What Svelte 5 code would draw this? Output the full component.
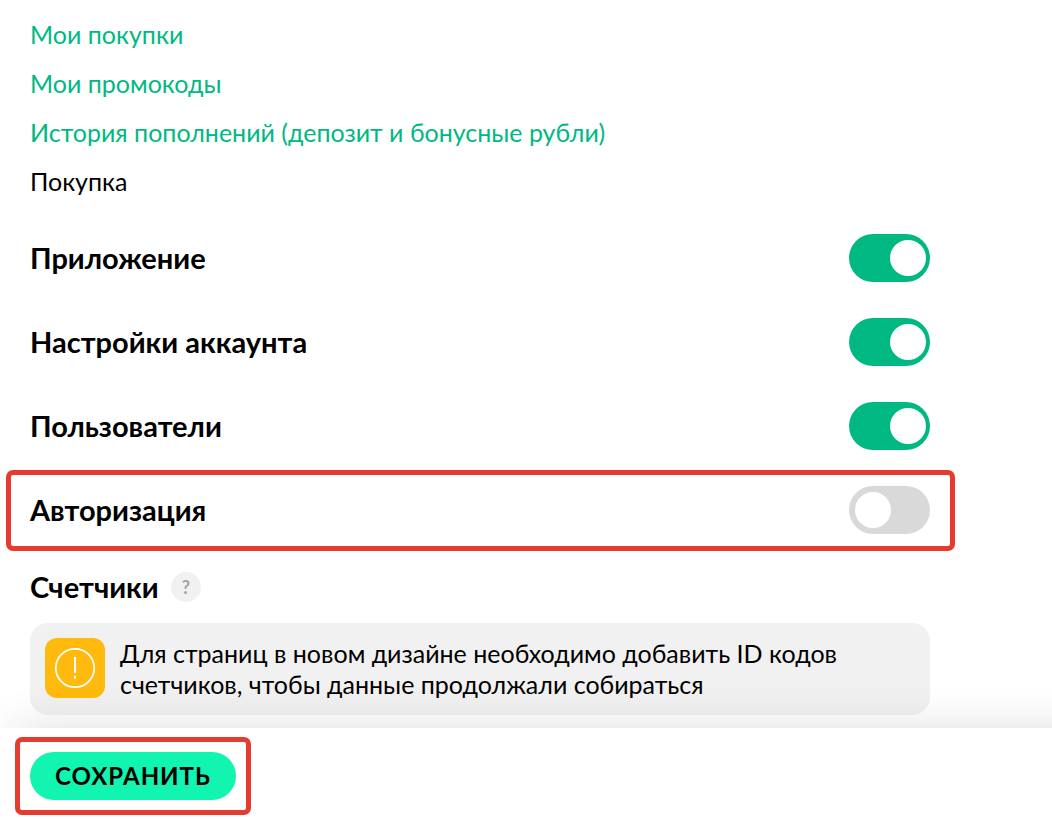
<script>
  const links = [
    'Мои покупки',
    'Мои промокоды',
    'История пополнений (депозит и бонусные рубли)'
  ];

  let sections = $state([
    { id: 'app', title: 'Приложение', on: true },
    { id: 'account', title: 'Настройки аккаунта', on: true },
    { id: 'users', title: 'Пользователи', on: true },
    { id: 'auth', title: 'Авторизация', on: false, marked: true }
  ]);
</script>

<div class="page">
  <main>
    <ul class="links">
      {#each links as link}
        <li><a href="#top">{link}</a></li>
      {/each}
      <li>Покупка</li>
    </ul>

    <div class="sections">
      {#each sections as section}
        <div class="section" class:marked={section.marked}>
          <label class="title" for={section.id}>{section.title}</label>
          <input id={section.id} class="toggle" type="checkbox" role="switch" bind:checked={section.on} />
        </div>
      {/each}
    </div>

    <div class="counters">
      <h2 class="title">Счетчики</h2>
      <button class="help" type="button">?</button>
    </div>

    <div class="notice">
      <svg class="badge" viewBox="0 0 60 60" aria-hidden="true">
        <rect width="60" height="60" rx="12" fill="#ffba0d" />
        <circle cx="30" cy="30" r="19.2" fill="none" stroke="#fff" stroke-width="1.7" />
        <path d="M30 19v16M30 37.7v3" fill="none" stroke="#fff" stroke-width="2" />
      </svg>
      <p>Для страниц в новом дизайне необходимо добавить ID кодов счетчиков, чтобы данные продолжали собираться</p>
    </div>
  </main>

  <footer>
    <div class="action marked">
      <button class="save" type="button">Сохранить</button>
    </div>
  </footer>
</div>

<style>
  :global(body) {
    margin: 0;
    background: #fff;
  }

  .page {
    display: flex;
    flex-direction: column;
    min-height: 100vh;
    overflow: hidden;
    color: #000;
    font-family: Lato, 'Open Sans', sans-serif;
    font-size: 25px;
    line-height: 31px;
  }

  main {
    box-sizing: border-box;
    width: 100%;
    max-width: 960px;
    padding: 19px 30px 13px;
  }

  .links {
    display: flex;
    flex-direction: column;
    gap: 18px;
    margin: 0 0 37px;
    padding: 0;
    list-style: none;
  }

  a {
    color: #00b982;
    text-decoration: none;
  }

  .sections {
    display: flex;
    flex-direction: column;
    gap: 36px;
  }

  .section {
    display: flex;
    align-items: center;
    justify-content: space-between;
  }

  .title {
    margin: 0;
    font-size: 29px;
    font-weight: 700;
    line-height: 30px;
  }

  .marked {
    position: relative;
  }

  .marked::after {
    content: '';
    position: absolute;
    inset: -16px -25px -17px -24px;
    border: 5px solid #e63c30;
    border-radius: 7px;
    pointer-events: none;
  }

  .toggle {
    appearance: none;
    display: flex;
    align-items: center;
    box-sizing: border-box;
    width: 81px;
    height: 48px;
    margin: 0;
    padding: 0 6px;
    border-radius: 24px;
    background: #d9d9d9;
    cursor: pointer;
  }

  .toggle::before {
    content: '';
    width: 36px;
    height: 36px;
    border-radius: 50%;
    background: #fff;
  }

  .toggle:checked {
    justify-content: flex-end;
    padding: 0 4px;
    background: #00b982;
  }

  .counters {
    display: flex;
    align-items: center;
    gap: 12px;
    margin: 38px 0 21px;
  }

  .help {
    width: 30px;
    height: 30px;
    padding: 0;
    border: 0;
    border-radius: 50%;
    background: #f1f1f1;
    color: #a3a3a3;
    font: 700 18px/30px Lato, 'Open Sans', sans-serif;
  }

  .notice {
    display: flex;
    gap: 15px;
    padding: 15px;
    border-radius: 18px;
    background: #f1f1f1;
  }

  .badge {
    flex: none;
    width: 60px;
    height: 60px;
  }

  .notice p {
    margin: 0;
    max-width: 750px;
  }

  footer {
    position: relative;
    flex: 1;
    margin-right: -60px;
    padding: 24px 30px 19px;
    background: #fff;
    box-shadow: 15px 0 45px rgba(0, 35, 20, 0.14);
  }

  .action {
    width: fit-content;
  }

  .action.marked::after {
    inset: -15px;
  }

  .save {
    display: block;
    height: 48px;
    padding: 0 25px;
    border: 0;
    border-radius: 24px;
    background: #12f5b0;
    color: #000;
    font: 700 24px/48px Lato, 'Open Sans', sans-serif;
    letter-spacing: 1px;
    text-transform: uppercase;
    cursor: pointer;
  }
</style>
